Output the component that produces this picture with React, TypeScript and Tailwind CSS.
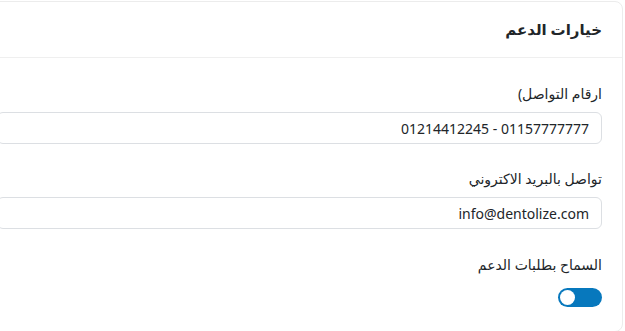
import { useState } from 'react'

// ---------------------------------------------------------------------------
// Support settings card (RTL)
// ---------------------------------------------------------------------------

function Field({ label, value }: { label: string; value: string }) {
  return (
    <div>
      <label className="block text-[14px] leading-5 text-[#212529] mb-2">{label}</label>
      <input
        type="text"
        defaultValue={value}
        dir="ltr"
        className="block w-full h-8 rounded-md border border-[#dcdfe3] bg-white px-3 text-right text-[14px] text-[#212529] focus:outline-none"
      />
    </div>
  )
}

function Toggle() {
  const [on, setOn] = useState(false)
  return (
    <button
      type="button"
      dir="ltr"
      onClick={() => setOn(v => !v)}
      className="flex w-11 h-[19px] items-center rounded-full bg-[#0778bd] px-[2px]"
    >
      <span className={on ? 'ml-auto block h-[15px] w-[15px] rounded-full bg-white' : 'block h-[15px] w-[15px] rounded-full bg-white'} />
    </button>
  )
}

export default function App() {
  return (
    <div dir="rtl" className="w-[625px] h-[331px] overflow-hidden bg-white pt-px" style={{ fontFamily: '"Noto Sans", "DejaVu Sans", sans-serif' }}>
      <div className="mr-[2px] -ml-6 rounded-lg border border-[#ececec] bg-white">
        <div className="h-14 flex items-center px-5 border-b border-[#efefef]">
          <h2 className="text-[15px] font-bold text-[#212529]">خيارات الدعم</h2>
        </div>

        <div className="px-5 pt-[26px] pb-6">
          <Field label="ارقام التواصل)" value="01214412245 - 01157777777" />
          <div className="h-[25px]" />
          <Field label="تواصل بالبريد الاكتروني" value="info@dentolize.com" />
          <div className="h-[26px]" />
          <p className="text-[14px] leading-5 text-[#212529]">السماح بطلبات الدعم</p>
          <div className="mt-[13px]">
            <Toggle />
          </div>
        </div>
      </div>
    </div>
  )
}
